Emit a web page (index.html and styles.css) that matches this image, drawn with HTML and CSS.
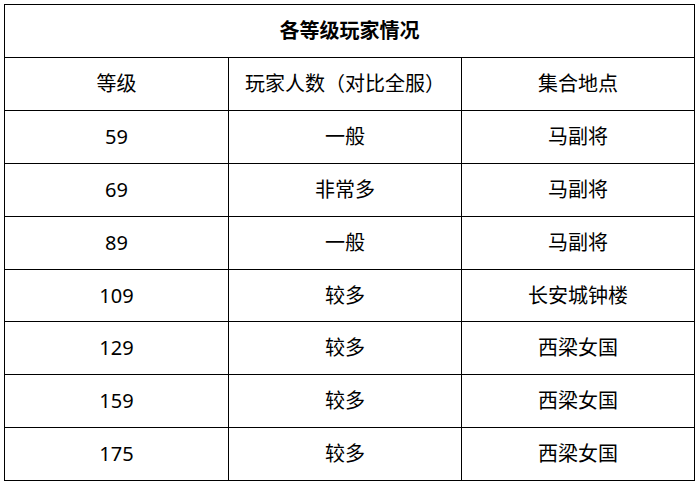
FILE: index.html
```html
<!DOCTYPE html>
<html lang="zh-CN">
<head>
<meta charset="utf-8">
<title>各等级玩家情况</title>
<link rel="stylesheet" href="styles.css">
</head>
<body>
<table class="stats">
  <colgroup>
    <col class="c1"><col class="c2"><col class="c3">
  </colgroup>
  <thead>
    <tr><th class="title" colspan="3">各等级玩家情况</th></tr>
    <tr><td>等级</td><td>玩家人数（对比全服）</td><td>集合地点</td></tr>
  </thead>
  <tbody>
    <tr><td>59</td><td>一般</td><td>马副将</td></tr>
    <tr><td>69</td><td>非常多</td><td>马副将</td></tr>
    <tr><td>89</td><td>一般</td><td>马副将</td></tr>
    <tr><td>109</td><td>较多</td><td>长安城钟楼</td></tr>
    <tr><td>129</td><td>较多</td><td>西梁女国</td></tr>
    <tr><td>159</td><td>较多</td><td>西梁女国</td></tr>
    <tr><td>175</td><td>较多</td><td>西梁女国</td></tr>
  </tbody>
</table>
</body>
</html>
```
FILE: styles.css
```css
html, body {
  margin: 0;
  padding: 0;
  background: #fff;
}
body {
  padding: 4px;
}
.stats {
  border-collapse: collapse;
  table-layout: fixed;
  width: 690px;
  font-family: "Noto Sans", "Noto Sans CJK SC", sans-serif;
  font-size: 20px;
  color: #000;
}
.c1 { width: 224px; }
.c2 { width: 233px; }
.c3 { width: 233px; }
.stats th, .stats td {
  border: 1px solid #000;
  height: 52px;
  padding: 0;
  text-align: center;
  vertical-align: middle;
  font-weight: normal;
  line-height: 1.2;
}
.stats tbody td {
  height: 51.86px;
}
.stats th.title {
  font-weight: bold;
}
```
